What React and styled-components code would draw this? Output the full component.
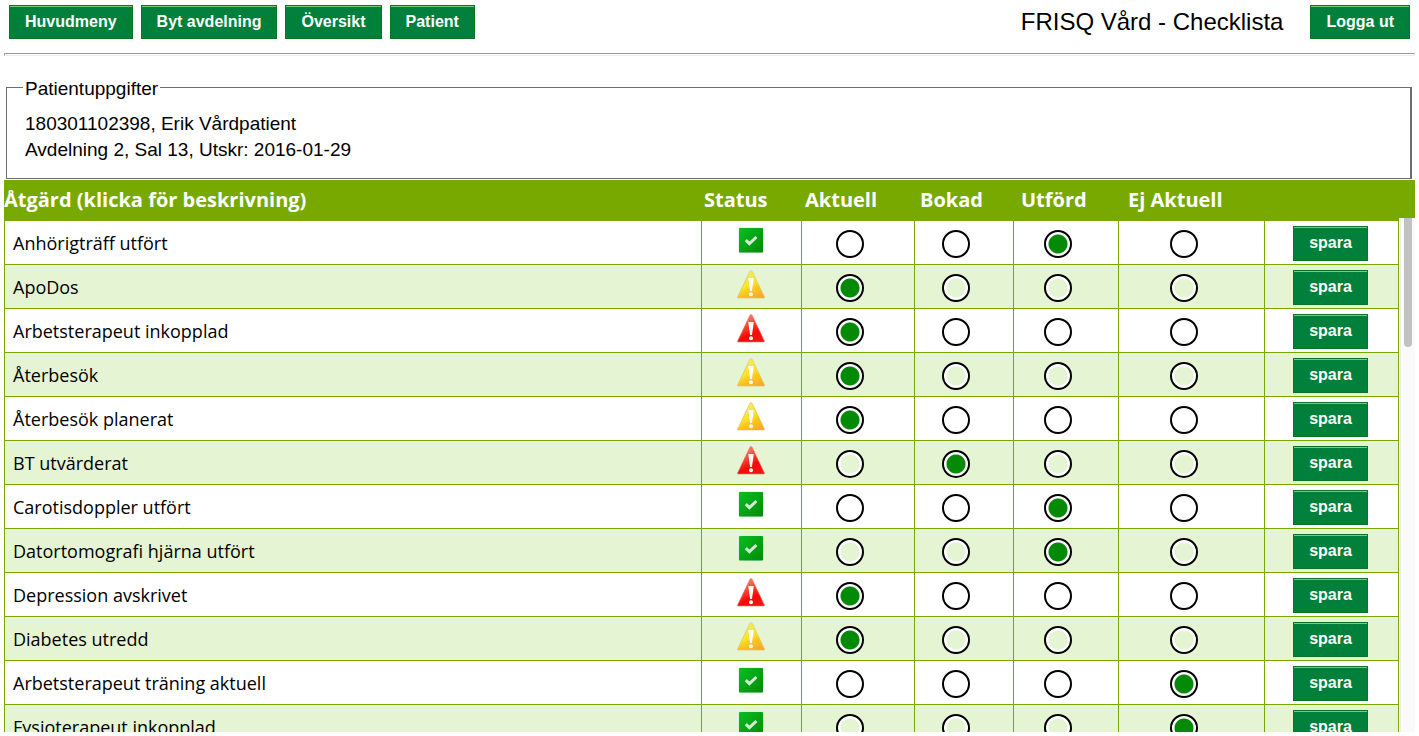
import React, { useId, useState } from "react";
import styled, { createGlobalStyle } from "styled-components";

const GlobalStyle = createGlobalStyle`
  *, *::before, *::after { box-sizing: border-box; }
  body {
    margin: 0;
    background: #fff;
    color: #000;
    font-family: "Helvetica Neue", "Liberation Sans", Arial, sans-serif;
  }
`;

const lime = "#77a900";
const tint = "#e5f4d3";
const tableFont = `"Trebuchet MS", "Open Sans", sans-serif`;

const Page = styled.div`
  display: flex;
  flex-direction: column;
  height: 100vh;
  padding: 5px 4px 4px;
`;

const Toolbar = styled.header`
  display: flex;
  align-items: center;
  gap: 27px;
  padding: 0 5px;
`;

const Nav = styled.nav`
  display: flex;
  flex: 1;
  gap: 8px;
`;

const Title = styled.h1`
  margin: 0;
  font-size: 24px;
  line-height: 34px;
  font-weight: 400;
`;

const Button = styled.button`
  height: ${(p) => (p.$row ? 35 : 34)}px;
  padding: ${(p) => (p.$row ? "0 15px 2px" : "0 15px")};
  border: 1px solid #0b7425;
  border-radius: 0;
  background: #00803a;
  box-shadow: inset 0 1px 0 #7bc97c;
  color: #fff;
  font: bold 16px/30px "Liberation Sans", Arial, sans-serif;
  cursor: pointer;
`;

const Rule = styled.hr`
  width: 100%;
  height: 3px;
  margin: 14px 0 0;
  border: 1px solid;
  border-color: #9a9a9a #eee #eee #9a9a9a;
`;

const PatientBox = styled.fieldset`
  height: 104px;
  margin: 19px 3px 1px 2px;
  padding: 12px 18px 0;
  border: 1px solid #6c6d70;
  border-right-width: 2px;
  font-size: 19px;
  line-height: 26px;
`;

const Legend = styled.legend`
  margin-left: -2px;
  padding: 4px 2px 0;
  line-height: 20px;
`;

const Line = styled.p`
  margin: 0;
`;

const ListPane = styled.main`
  position: relative;
  display: flex;
  flex: 1;
  min-height: 0;
`;

const Table = styled.table`
  display: flex;
  flex-direction: column;
  width: 100%;
  font-family: ${tableFont};
`;

const Head = styled.thead`
  display: block;
  background: ${lime};
  color: #fff;
`;

const HeadRow = styled.tr`
  display: grid;
  grid-template-columns: minmax(0, 1fr) 101px 115px 101px 107px 146px 141px;
`;

const HeadCell = styled.th`
  padding: 2px 0 0;
  font-size: 20px;
  line-height: 36px;
  font-weight: 700;
  text-align: left;
  white-space: nowrap;
`;

const Body = styled.tbody`
  display: block;
  flex: 1;
  min-height: 0;
  margin-right: 16px;
  border-top: 3px solid ${lime};
  overflow-y: auto;
  scrollbar-width: none;
`;

const Row = styled.tr`
  --row: #fff;
  display: grid;
  grid-template-columns: minmax(0, 1fr) 100px 113px 99px 105px 146px 134px;
  height: 44px;
  border-left: 1px solid ${lime};
  border-bottom: 1px solid ${lime};
  background: var(--row);
  &:nth-child(even) { --row: ${tint}; }
`;

const Cell = styled.td`
  display: flex;
  align-items: center;
  justify-content: ${(p) => (p.$name ? "flex-start" : "center")};
  padding: ${(p) => (p.$name ? "0 8px" : p.$choice ? "2px 16px 0 0" : "2px 2px 0 0")};
  border-right: 1px solid ${lime};
`;

const StatusCell = styled(Cell)`
  align-items: flex-start;
  padding-top: 4px;
`;

const ItemLink = styled.a`
  color: inherit;
  font-size: 18px;
  line-height: 24px;
  text-decoration: none;
`;

const Radio = styled.input`
  appearance: none;
  width: 28px;
  height: 28px;
  margin: 0;
  border: 2px solid #000;
  border-radius: 50%;
  background: radial-gradient(circle, var(--row) 9px, #fff 10px);
  &:checked { background: radial-gradient(circle, #058a08 9px, #fff 10px); }
`;

const Track = styled.div`
  position: absolute;
  top: 38px;
  right: 0;
  bottom: 0;
  width: 15px;
  padding: 0 3px;
  border-left: 1px solid #ececec;
  background: #fafafa;
`;

const Thumb = styled.div`
  width: 8px;
  height: 25%;
  border-radius: 0 0 4px 4px;
  background: #c1c1c1;
`;

function StatusIcon({ kind }) {
  const id = useId();
  if (kind === "ok") {
    return (
      <svg width="30" height="30" viewBox="0 0 30 30" role="img" aria-label="Klar">
        <defs>
          <linearGradient id={id} x1="0" y1="0" x2="1" y2="1">
            <stop offset="0" stopColor="#08c020" />
            <stop offset="1" stopColor="#008a08" />
          </linearGradient>
        </defs>
        <rect x="2.5" y="2.5" width="25" height="25.5" rx="1.5" fill="#d4ecd9" />
        <rect x="3" y="3" width="24" height="24.5" rx="1" fill={`url(#${id})`} />
        <path d="M9.8 15.2 L13.4 18.6 L20.4 12" fill="none" stroke="#d5ead8" strokeWidth="3" />
      </svg>
    );
  }
  const red = kind === "alert";
  return (
    <svg width="30" height="30" viewBox="0 0 30 30" role="img" aria-label={red ? "Försenad" : "Varning"}>
      <defs>
        <linearGradient id={id} x1="0.3" y1="0" x2="0.8" y2="1">
          <stop offset="0" stopColor={red ? "#ff8a78" : "#f2f060"} />
          <stop offset="0.5" stopColor={red ? "#fb2a1c" : "#fbe128"} />
          <stop offset="0.65" stopColor={red ? "#f80806" : "#fcc61c"} />
          <stop offset="1" stopColor={red ? "#f01818" : "#f8a82c"} />
        </linearGradient>
      </defs>
      <path
        d="M15 1.5 Q15.8 1.5 16.3 2.6 L28.4 28 Q28.7 29 27.8 29 H2.2 Q1.3 29 1.6 28 L13.7 2.6 Q14.2 1.5 15 1.5 Z"
        fill={`url(#${id})`}
        stroke={red ? "#d87870" : "#d8c060"}
        strokeWidth="0.6"
      />
      <path d="M12.3 9 H17.7 L16 22 H14 Z" fill="#fff" />
      <circle cx="15" cy="25.3" r="2" fill="#fff" />
    </svg>
  );
}

const choices = ["Aktuell", "Bokad", "Utförd", "Ej Aktuell"];

const items = [
  ["Anhörigträff utfört", "ok", 2],
  ["ApoDos", "warn", 0],
  ["Arbetsterapeut inkopplad", "alert", 0],
  ["Återbesök", "warn", 0],
  ["Återbesök planerat", "warn", 0],
  ["BT utvärderat", "alert", 1],
  ["Carotisdoppler utfört", "ok", 2],
  ["Datortomografi hjärna utfört", "ok", 2],
  ["Depression avskrivet", "alert", 0],
  ["Diabetes utredd", "warn", 0],
  ["Arbetsterapeut träning aktuell", "ok", 3],
  ["Fysioterapeut inkopplad", "ok", 3],
];

function ChecklistRow({ name, status, initial }) {
  const [selected, setSelected] = useState(initial);
  return (
    <Row>
      <Cell $name>
        <ItemLink href="#">{name}</ItemLink>
      </Cell>
      <StatusCell>
        <StatusIcon kind={status} />
      </StatusCell>
      {choices.map((choice, i) => (
        <Cell key={choice} $choice>
          <Radio
            type="radio"
            name={name}
            aria-label={`${name}: ${choice}`}
            checked={selected === i}
            onChange={() => setSelected(i)}
          />
        </Cell>
      ))}
      <Cell>
        <Button type="button" $row>spara</Button>
      </Cell>
    </Row>
  );
}

export default function App() {
  return (
    <>
      <GlobalStyle />
      <Page>
        <Toolbar>
          <Nav>
            {["Huvudmeny", "Byt avdelning", "Översikt", "Patient"].map((t) => (
              <Button type="button" key={t}>{t}</Button>
            ))}
          </Nav>
          <Title>FRISQ Vård - Checklista</Title>
          <Button type="button">Logga ut</Button>
        </Toolbar>
        <Rule />
        <PatientBox>
          <Legend>Patientuppgifter</Legend>
          <Line>180301102398, Erik Vårdpatient</Line>
          <Line>Avdelning 2, Sal 13, Utskr: 2016-01-29</Line>
        </PatientBox>
        <ListPane>
          <Table>
            <Head>
              <HeadRow>
                <HeadCell scope="col">Åtgärd (klicka för beskrivning)</HeadCell>
                <HeadCell scope="col">Status</HeadCell>
                {choices.map((c) => (
                  <HeadCell scope="col" key={c}>{c}</HeadCell>
                ))}
                <HeadCell aria-label="Spara" />
              </HeadRow>
            </Head>
            <Body>
              {items.map(([name, status, initial]) => (
                <ChecklistRow key={name} name={name} status={status} initial={initial} />
              ))}
            </Body>
          </Table>
          <Track aria-hidden="true">
            <Thumb />
          </Track>
        </ListPane>
      </Page>
    </>
  );
}
